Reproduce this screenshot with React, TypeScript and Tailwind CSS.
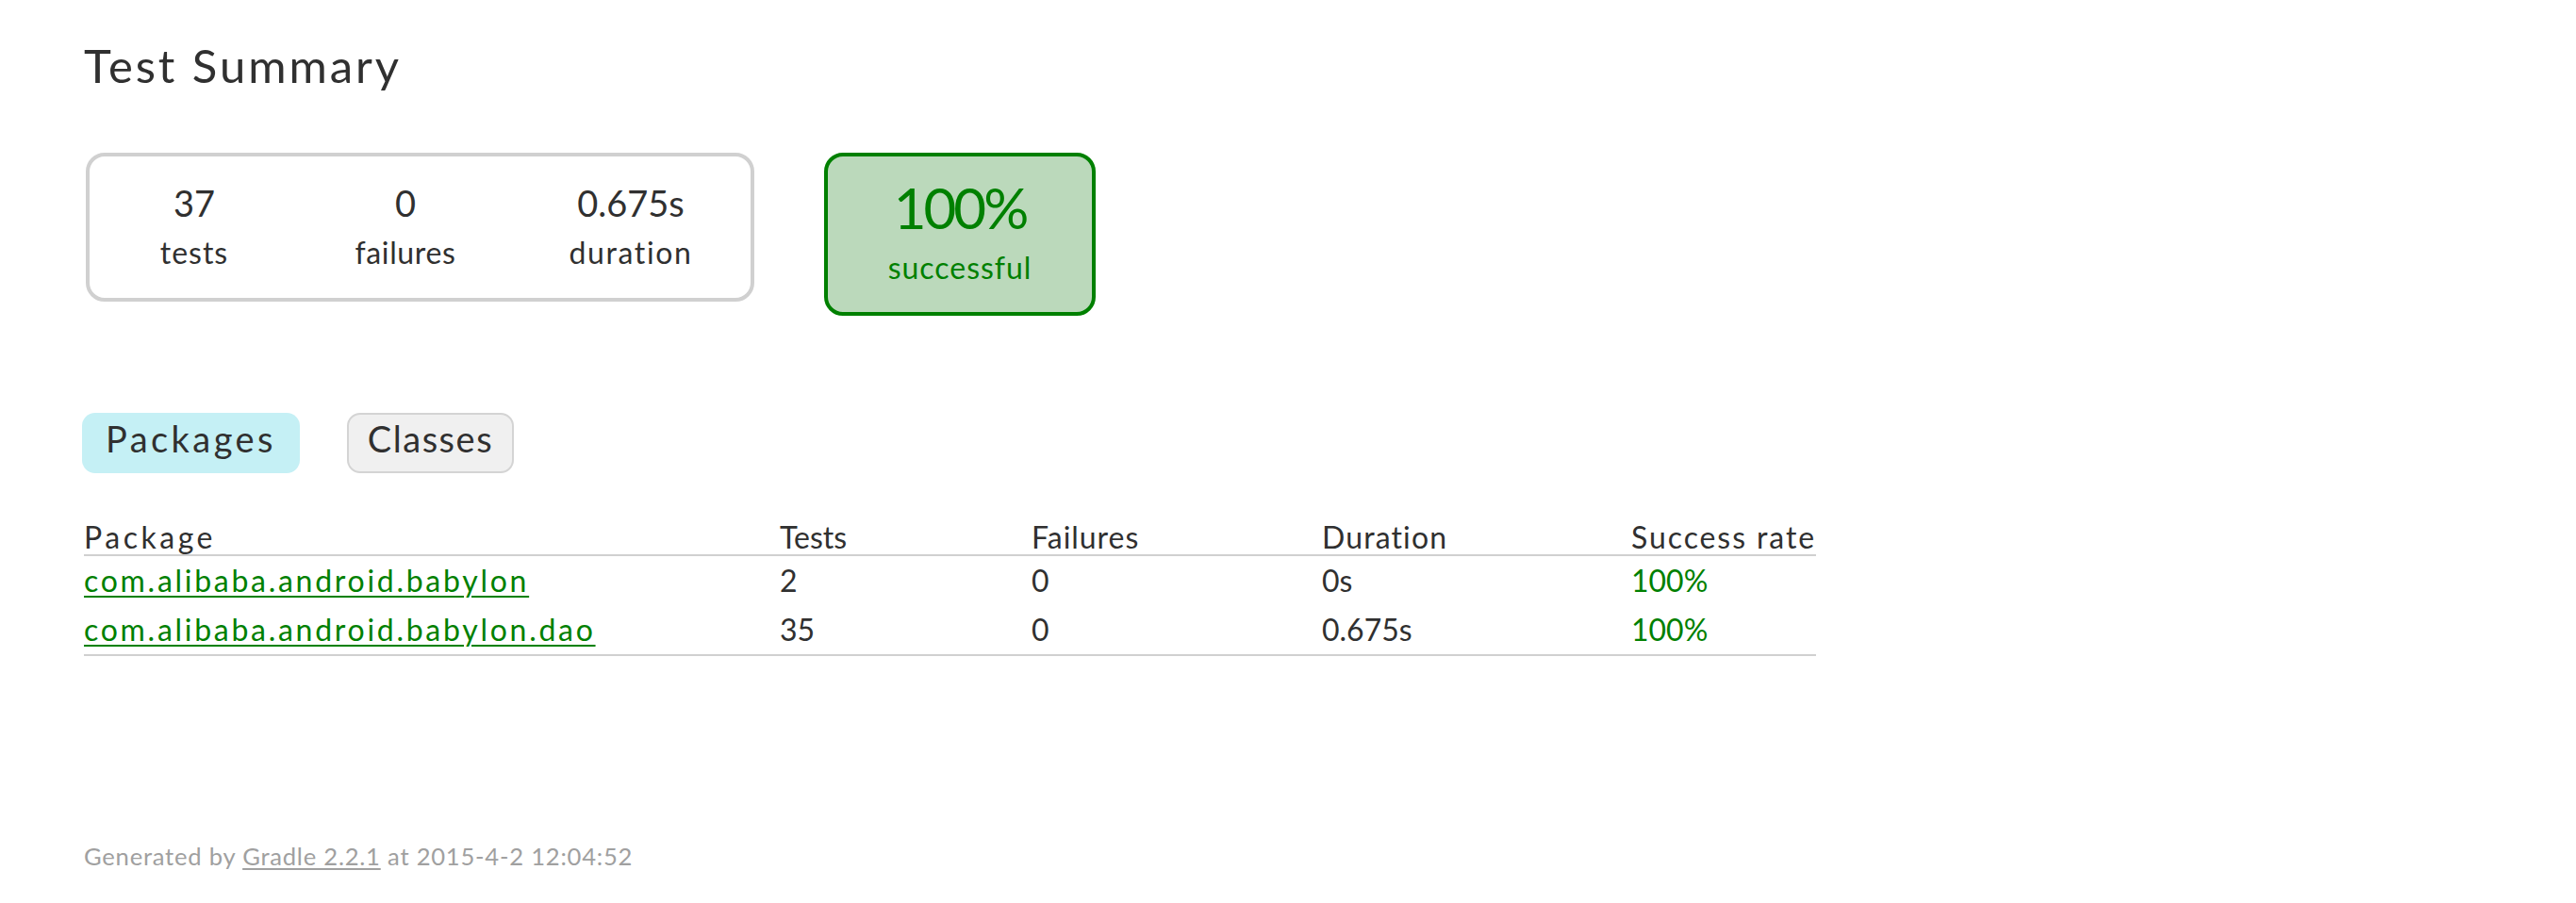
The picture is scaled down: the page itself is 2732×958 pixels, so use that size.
const rows = [
  { name: "com.alibaba.android.babylon", tests: "2", failures: "0", duration: "0s", rate: "100%" },
  { name: "com.alibaba.android.babylon.dao", tests: "35", failures: "0", duration: "0.675s", rate: "100%" },
];

const InfoBox = ({
  value,
  label,
  width,
  tracking,
}: {
  value: string;
  label: string;
  width: string;
  tracking: string;
}) => (
  <div className={`flex flex-col items-center pt-[26px] ${width}`}>
    <p className="text-[38px] leading-[46px]">{value}</p>
    <p className={`mt-[10px] text-[32px] leading-[40px] ${tracking}`}>{label}</p>
  </div>
);

const App = () => {
  return (
    <div
      className="w-full h-[958px] bg-white text-[#303030] pl-[89px] pt-[44px]"
      style={{ fontFamily: "Lato, 'Noto Sans', sans-serif" }}
    >
      <h1 className="text-[49px] leading-[50px] tracking-[0.06em] whitespace-nowrap">Test Summary</h1>

      <div className="flex items-start gap-[74px] mt-[68px] ml-[2px]">
        <div className="flex w-[709px] h-[158px] border-[4px] border-[#d0d0d0] rounded-[20px]">
          <InfoBox value="37" label="tests" width="w-[222px]" tracking="tracking-[0.03em]" />
          <InfoBox value="0" label="failures" width="w-[226px]" tracking="tracking-[0.02em]" />
          <InfoBox value="0.675s" label="duration" width="w-[252px]" tracking="tracking-[0.05em]" />
        </div>
        <div className="flex flex-col items-center w-[288px] h-[173px] border-[4px] border-[#008000] bg-[#bbd9bb] rounded-[20px] text-[#008000] pt-[24px]">
          <p className="text-[60px] leading-[60px] tracking-[-0.05em]">100%</p>
          <p className="mt-[14px] text-[32px] leading-[40px] tracking-[0.03em]">successful</p>
        </div>
      </div>

      <div className="flex gap-[50px] mt-[103px] -ml-[2px]">
        <div className="flex justify-center w-[231px] h-[64px] pt-[4px] rounded-[14px] bg-[#c5f0f5] text-[38px] leading-[46px] tracking-[0.09em]">
          Packages
        </div>
        <div className="flex justify-center w-[177px] h-[64px] pt-[2px] rounded-[14px] border-[2px] border-[#d4d4d4] bg-[#f0f0f0] text-[38px] leading-[46px] tracking-[0.04em]">
          Classes
        </div>
      </div>

      <div className="mt-[47px] w-[1837px] text-[32px] whitespace-nowrap">
        <div className="grid grid-cols-[738px_267px_308px_328px_196px] h-[41px] leading-[41px] border-b-[2px] border-[#d0d0d0]">
          <div className="tracking-[0.11em]">Package</div>
          <div>Tests</div>
          <div className="tracking-[0.03em]">Failures</div>
          <div className="tracking-[0.035em]">Duration</div>
          <div className="tracking-[0.06em]">Success rate</div>
        </div>
        <div className="border-b-[2px] border-[#d0d0d0]">
          {rows.map((r) => (
            <div
              key={r.name}
              className="grid grid-cols-[738px_267px_308px_328px_196px] h-[52px] leading-[52px]"
            >
              <div>
                <a
                  className="text-[#008000] tracking-[0.085em] underline decoration-[2px] underline-offset-[4px]"
                  href="#"
                >
                  {r.name}
                </a>
              </div>
              <div>{r.tests}</div>
              <div>{r.failures}</div>
              <div>{r.duration}</div>
              <div className="text-[#008000]">{r.rate}</div>
            </div>
          ))}
        </div>
      </div>

      <div className="mt-[197px] text-[25.6px] leading-[30px] tracking-[0.03em] text-[#a0a0a0] whitespace-nowrap">
        Generated by{" "}
        <a className="text-[#a0a0a0] underline decoration-[2px] underline-offset-[3px]" href="#">
          Gradle 2.2.1
        </a>{" "}
        at 2015-4-2 12:04:52
      </div>
    </div>
  );
};

export default App;
